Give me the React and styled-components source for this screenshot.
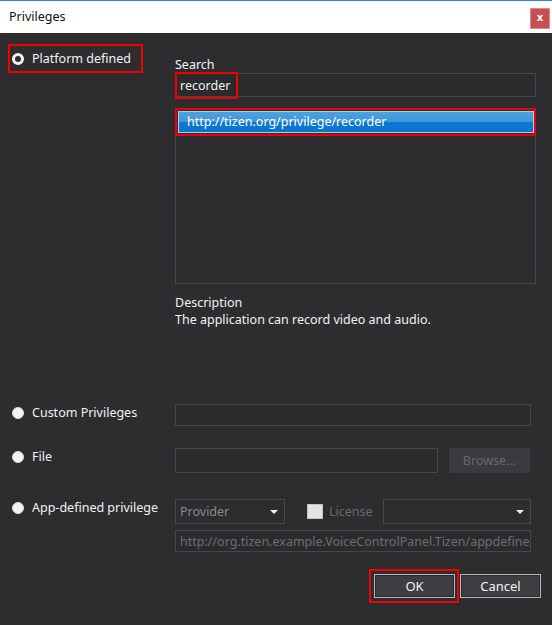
import React from 'react';
import styled, { createGlobalStyle } from 'styled-components';

const Global = createGlobalStyle`
  html, body { margin: 0; padding: 0; background: #2d2d30; }
  body { width: 552px; height: 625px; overflow: hidden; }
  * { box-sizing: border-box; }
`;

const RED = '#f00000';

const Window = styled.div`
  width: 552px;
  height: 625px;
  background: #2d2d30;
  display: flex;
  flex-direction: column;
  font-family: "Noto Sans", "Liberation Sans", sans-serif;
  font-size: 12.5px;
  color: #f2f2f2;
`;

const TitleBar = styled.div`
  height: 33px;
  background: #ffffff;
  border-top: 1px solid #2f80d6;
  display: flex;
  justify-content: space-between;
  padding: 0 2px 0 9px;
`;

const Title = styled.div`
  font-size: 12.5px;
  color: #111;
  line-height: 32px;
`;

const CloseButton = styled.div`
  margin-top: 7px;
  width: 20px;
  height: 21px;
  background: #c74f52;
  border: 1px solid #dc8a8c;
  color: #fff;
  font-family: "DejaVu Sans", sans-serif;
  font-weight: bold;
  font-size: 10px;
  display: flex;
  align-items: center;
  justify-content: center;
  line-height: 1;
  padding-bottom: 2px;
`;

const Body = styled.div`
  display: flex;
  flex-direction: column;
  padding: 0 0 0 8px;
`;

const Row = styled.div`
  display: grid;
  grid-template-columns: 167px minmax(0, 1fr);
  align-items: start;
  margin-top: ${p => p.$top}px;
  padding-right: ${p => p.$right}px;
`;

const OptionLabel = styled.div`
  display: flex;
  align-items: center;
  gap: 8px;
  height: 17px;
  padding-left: 4px;
  line-height: 17px;
  white-space: nowrap;
`;

const Highlighted = styled.div`
  border: 2px solid ${RED};
  width: 135px;
  height: 29px;
  display: flex;
  align-items: center;
  & > div { padding-left: 2px; }
`;

const Radio = styled.span`
  width: 12px;
  height: 12px;
  border-radius: 50%;
  flex: none;
  background: ${p => (p.$checked ? '#2d2d30' : '#f4f4f4')};
  border: ${p => (p.$checked ? '3px solid #f4f4f4' : '1px solid #dcdcdc')};
`;

const SearchPanel = styled.div`
  padding-top: 12px;
  display: flex;
  flex-direction: column;
`;

const FieldLabel = styled.div`
  line-height: 17px;
  height: 17px;
`;

const TextBox = styled.div`
  position: relative;
  min-width: 0;
  height: ${p => p.$h || 24}px;
  margin-top: ${p => p.$mt || 0}px;
  border: 1px solid #45454a;
  background: #2b2b2e;
  padding-left: 4px;
  display: flex;
  align-items: center;
  white-space: nowrap;
  overflow: ${p => (p.$clip ? 'hidden' : 'visible')};
  color: ${p => (p.$muted ? '#6d6d70' : '#f2f2f2')};
  flex: ${p => (p.$grow ? 1 : 'none')};
`;

const Overlay = styled.div`
  position: absolute;
  border: 2px solid ${RED};
  pointer-events: none;
`;

const SearchMark = styled(Overlay)`
  left: -1px;
  top: -2px;
  width: 63px;
  height: 27px;
`;

const ListBox = styled.div`
  position: relative;
  margin-top: 11px;
  height: 176px;
  border: 1px solid #48484c;
  padding: 2px 1px 2px 2px;
`;

const ListItem = styled.div`
  height: 22px;
  border: 1px solid #a9d0ef;
  background: linear-gradient(to bottom, #4ea1de 0%, #3f97da 48%, #0b78cf 50%, #0a74cb 100%);
  color: #fff;
  padding-left: 8px;
  line-height: 20px;
`;

const ItemMark = styled(Overlay)`
  left: -1px;
  right: -1px;
  top: -1px;
  height: 28px;
`;

const Description = styled.div`
  margin-top: 10px;
  line-height: 17px;
`;

const Inline = styled.div`
  display: flex;
  align-items: center;
  gap: ${p => p.$gap || 0}px;
`;

const Stack = styled.div`
  display: flex;
  flex-direction: column;
  min-width: 0;
`;

const BrowseButton = styled.div`
  width: 81px;
  height: 25px;
  background: #3b3b3f;
  color: #68686b;
  display: flex;
  align-items: center;
  justify-content: center;
`;

const Select = styled.div`
  width: ${p => p.$w}px;
  height: 25px;
  border: 1px solid #48484c;
  background: #2d2d30;
  color: #8a8a8d;
  display: flex;
  align-items: center;
  justify-content: space-between;
  padding: 0 6px 0 4px;
  margin-left: ${p => p.$ml || 0}px;
  flex: none;
`;

const Arrow = styled.span`
  width: 0;
  height: 0;
  border-left: 4px solid transparent;
  border-right: 4px solid transparent;
  border-top: 4px solid #f0f0f0;
`;

const CheckBox = styled.span`
  width: 16px;
  height: 15px;
  background: #e4e4e4;
  border: 1px solid #c4c4c4;
  margin-left: 22px;
  flex: none;
`;

const MutedText = styled.span`
  color: #6a6a6d;
  margin-left: 6px;
  width: 48px;
  flex: none;
`;

const Footer = styled.div`
  margin-top: 17px;
  display: flex;
  justify-content: flex-end;
  align-items: center;
  padding-right: 11px;
`;

const OkMark = styled.div`
  border: 2px solid ${RED};
  padding: 3px 2px 3px 3px;
`;

const Button = styled.div`
  width: 81px;
  height: 24px;
  background: #3d3d42;
  border: 1px solid #b9b9b9;
  box-shadow: inset 0 0 0 1px #2a2a2d;
  color: #f4f4f4;
  font-size: 13px;
  display: flex;
  align-items: center;
  justify-content: center;
  margin-left: ${p => p.$ml || 0}px;
`;

export default function App() {
  return (
    <Window>
      <Global />
      <TitleBar>
        <Title>Privileges</Title>
        <CloseButton>x</CloseButton>
      </TitleBar>
      <Body>
        <Row $top={11} $right={16}>
          <Highlighted>
            <OptionLabel>
              <Radio $checked />
              Platform defined
            </OptionLabel>
          </Highlighted>
          <SearchPanel>
            <FieldLabel>Search</FieldLabel>
            <TextBox>
              recorder
              <SearchMark />
            </TextBox>
            <ListBox>
              <ListItem>http://tizen.org/privilege/recorder</ListItem>
              <ItemMark />
            </ListBox>
            <Description>
              Description
              <br />
              The application can record video and audio.
            </Description>
          </SearchPanel>
        </Row>

        <Row $top={76} $right={21}>
          <OptionLabel>
            <Radio />
            Custom Privileges
          </OptionLabel>
          <TextBox $h={22} />
        </Row>

        <Row $top={22} $right={22}>
          <OptionLabel>
            <Radio />
            File
          </OptionLabel>
          <Inline $gap={11}>
            <TextBox $h={25} $grow />
            <BrowseButton>Browse...</BrowseButton>
          </Inline>
        </Row>

        <Row $top={26} $right={21}>
          <OptionLabel>
            <Radio />
            App-defined privilege
          </OptionLabel>
          <Stack>
            <Inline>
              <Select $w={110}>
                Provider
                <Arrow />
              </Select>
              <CheckBox />
              <MutedText>License</MutedText>
              <Select $w={148} $ml={6}>
                <span />
                <Arrow />
              </Select>
            </Inline>
            <TextBox $h={22} $mt={6} $muted $clip>
              http://org.tizen.example.VoiceControlPanel.Tizen/appdefined
            </TextBox>
          </Stack>
        </Row>

        <Footer>
          <OkMark>
            <Button>OK</Button>
          </OkMark>
          <Button $ml={1}>Cancel</Button>
        </Footer>
      </Body>
    </Window>
  );
}
